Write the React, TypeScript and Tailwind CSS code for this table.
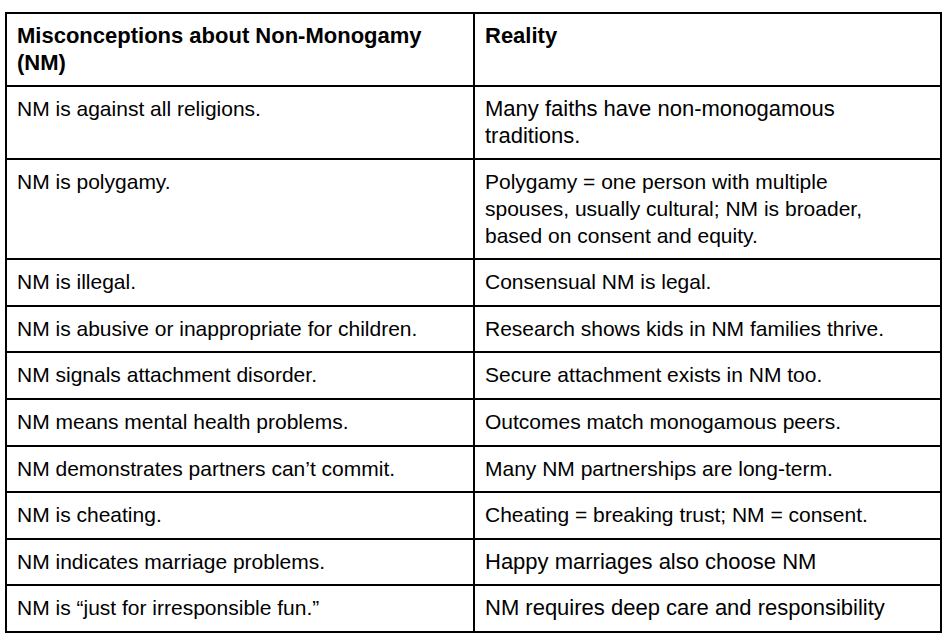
import React from "react";

type Row = { a: React.ReactNode; b: React.ReactNode; bBig?: boolean };

const rows: Row[] = [
  { a: "NM is against all religions.", b: <>Many faiths have non-monogamous<br />traditions.</>, bBig: true },
  {
    a: "NM is polygamy.",
    b: (
      <>
        Polygamy = one person with multiple
        <br />
        spouses, usually cultural; NM is broader,
        <br />
        based on consent and equity.
      </>
    ),
  },
  { a: "NM is illegal.", b: "Consensual NM is legal." },
  { a: "NM is abusive or inappropriate for children.", b: "Research shows kids in NM families thrive." },
  { a: "NM signals attachment disorder.", b: "Secure attachment exists in NM too." },
  { a: "NM means mental health problems.", b: "Outcomes match monogamous peers." },
  { a: "NM demonstrates partners can\u2019t commit.", b: "Many NM partnerships are long-term." },
  { a: "NM is cheating.", b: "Cheating = breaking trust; NM = consent." },
  { a: "NM indicates marriage problems.", b: "Happy marriages also choose NM", bBig: true },
  { a: "NM is \u201cjust for irresponsible fun.\u201d", b: "NM requires deep care and responsibility", bBig: true },
];

export default function App() {
  return (
    <div className="min-h-[643px] w-[948px] bg-white pl-[5px] pt-[12px]" style={{ fontFamily: '"Liberation Sans", Arial, sans-serif' }}>
      <div className="w-[937px] border-2 border-black text-[21px] leading-[26.6px] text-black">
        <div className="grid grid-cols-[468px_1fr] border-b-2 border-black text-[22px]">
          <div className="border-r-2 border-black px-[10px] py-[9px] font-bold">
            Misconceptions about Non-Monogamy
            <br />
            (NM)
          </div>
          <div className="px-[10px] py-[9px] font-bold">Reality</div>
        </div>
        {rows.map((r, i) => (
          <div
            key={i}
            className={
              i < rows.length - 1
                ? "grid grid-cols-[468px_1fr] border-b-2 border-black"
                : "grid grid-cols-[468px_1fr]"
            }
          >
            <div className="border-r-2 border-black px-[10px] py-[9px]">{r.a}</div>
            <div className={r.bBig ? "px-[10px] py-[9px] text-[22px]" : "px-[10px] py-[9px]"}>{r.b}</div>
          </div>
        ))}
      </div>
    </div>
  );
}
